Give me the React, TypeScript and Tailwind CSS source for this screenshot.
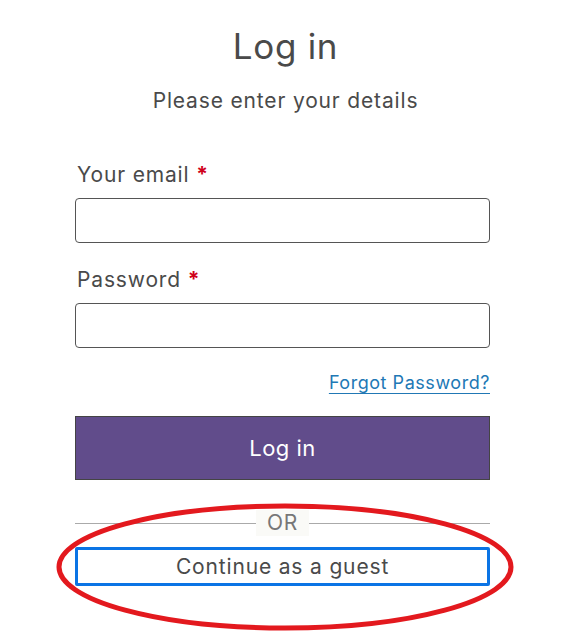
export default function App() {
  return (
    <div
      className="relative w-[571px] h-[643px] bg-white overflow-hidden"
      style={{ fontFamily: "Inter, 'Open Sans', sans-serif" }}
    >
      <div className="flex flex-col items-center pt-[26px]">
        <h1 className="text-[35px] leading-[40px] tracking-[0.02em] text-[#4a4a4a]">
          Log in
        </h1>
        <p className="mt-[21px] text-[21px] leading-[28px] tracking-[0.04em] text-[#4a4a4a]">
          Please enter your details
        </p>
      </div>

      <form className="mx-[75px] mt-[46px] flex w-[415px] flex-col text-[#4a4a4a]">
        <label className="pl-[2px] text-[21px] leading-[28px] tracking-[0.04em]">
          Your email <span className="font-bold text-[#d0021b]">*</span>
        </label>
        <input
          type="email"
          className="mt-[9px] h-[45px] w-[415px] rounded-[4px] border border-[#555] bg-white"
        />

        <label className="mt-[23px] pl-[2px] text-[21px] leading-[28px] tracking-[0.04em]">
          Password <span className="font-bold text-[#d0021b]">*</span>
        </label>
        <input
          type="password"
          className="mt-[9px] h-[45px] w-[415px] rounded-[4px] border border-[#555] bg-white"
        />

        <div className="mt-[23px] flex justify-end">
          <a
            href="#"
            className="text-[18px] leading-[24px] tracking-[0.03em] text-[#2178b5] underline decoration-1 underline-offset-[4px]"
          >
            Forgot Password?
          </a>
        </div>

        <button
          type="button"
          className="mt-[21px] h-[64px] w-[415px] border border-[#444] bg-[#614c8b] text-[22px] tracking-[0.02em] text-white"
        >
          Log in
        </button>

        <div className="mt-[30px] flex items-center">
          <div className="h-px flex-1 bg-[#aaa]" />
          <span className="bg-[#fafaf7] px-[11px] text-[21px] leading-[26px] tracking-[0.04em] text-[#777]">
            OR
          </span>
          <div className="h-px flex-1 bg-[#aaa]" />
        </div>

        <button
          type="button"
          className="mt-[11px] h-[39px] w-[415px] rounded-[2px] border-[3px] border-[#0b74e5] bg-white text-[21px] tracking-[0.04em] text-[#4a4a4a]"
        >
          Continue as a guest
        </button>
      </form>

      <svg
        className="pointer-events-none absolute left-0 top-0"
        width="571"
        height="643"
      >
        <ellipse
          cx="285"
          cy="567"
          rx="226"
          ry="61"
          fill="none"
          stroke="#e3191e"
          strokeWidth="5"
        />
      </svg>
    </div>
  );
}
